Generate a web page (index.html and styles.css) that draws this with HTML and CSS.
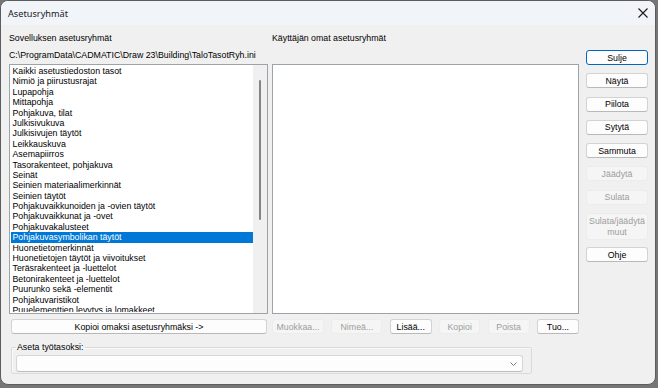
FILE: index.html
```html
<!DOCTYPE html>
<html lang="fi">
<head>
<meta charset="utf-8">
<title>Asetusryhmät</title>
<link rel="stylesheet" href="styles.css">
</head>
<body>
<div class="window">
  <div class="titlebar">
    <span class="title">Asetusryhmät</span>
    <span class="close">
      <svg width="10" height="10" viewBox="0 0 10 10"><path d="M0.5 0.5 L9.5 9.5 M9.5 0.5 L0.5 9.5" stroke="#1a1a1a" stroke-width="1.1" fill="none"/></svg>
    </span>
  </div>
  <div class="content">
    <div class="main">
      <div class="cols">
        <div class="head">
          <div class="label">Sovelluksen asetusryhmät</div>
          <div class="label path">C:\ProgramData\CADMATIC\Draw 23\Building\TaloTasotRyh.ini</div>
        </div>
        <div class="head">
          <div class="label">Käyttäjän omat asetusryhmät</div>
        </div>
        <div class="listbox left-list">
          <div class="items">
            <div class="item">Kaikki asetustiedoston tasot</div>
            <div class="item">Nimiö ja piirustusrajat</div>
            <div class="item">Lupapohja</div>
            <div class="item">Mittapohja</div>
            <div class="item">Pohjakuva, tilat</div>
            <div class="item">Julkisivukuva</div>
            <div class="item">Julkisivujen täytöt</div>
            <div class="item">Leikkauskuva</div>
            <div class="item">Asemapiirros</div>
            <div class="item">Tasorakenteet, pohjakuva</div>
            <div class="item">Seinät</div>
            <div class="item">Seinien materiaalimerkinnät</div>
            <div class="item">Seinien täytöt</div>
            <div class="item">Pohjakuvaikkunoiden ja -ovien täytöt</div>
            <div class="item">Pohjakuvaikkunat ja -ovet</div>
            <div class="item">Pohjakuvakalusteet</div>
            <div class="item selected">Pohjakuvasymbolikan täytöt</div>
            <div class="item">Huonetietomerkinnät</div>
            <div class="item">Huonetietojen täytöt ja viivoitukset</div>
            <div class="item">Teräsrakenteet ja -luettelot</div>
            <div class="item">Betonirakenteet ja -luettelot</div>
            <div class="item">Puurunko sekä -elementit</div>
            <div class="item">Pohjakuvaristikot</div>
            <div class="item">Puuelementtien levytys ja lomakkeet</div>
          </div>
          <div class="scrollbar"><div class="thumb"></div></div>
        </div>
        <div class="listbox right-list"></div>
        <div class="copyrow">
          <button class="btn wide">Kopioi omaksi asetusryhmäksi -&gt;</button>
        </div>
        <div class="actions">
          <button class="btn dis w52">Muokkaa...</button>
          <button class="btn dis w51">Nimeä...</button>
          <button class="btn w42">Lisää...</button>
          <button class="btn dis w41">Kopioi</button>
          <button class="btn dis w42">Poista</button>
          <button class="btn w42">Tuo...</button>
        </div>
      </div>
      <fieldset class="group">
        <legend>Aseta työtasoksi:</legend>
        <div class="combo">
          <svg width="7" height="4" viewBox="0 0 7 4"><path d="M0.5 0.5 L3.5 3.5 L6.5 0.5" stroke="#6a6a6a" stroke-width="0.9" fill="none"/></svg>
        </div>
      </fieldset>
    </div>
    <div class="side">
      <button class="btn sbtn default">Sulje</button>
      <button class="btn sbtn">Näytä</button>
      <button class="btn sbtn">Piilota</button>
      <button class="btn sbtn">Sytytä</button>
      <button class="btn sbtn">Sammuta</button>
      <button class="btn sbtn dis">Jäädytä</button>
      <button class="btn sbtn dis">Sulata</button>
      <button class="btn sbtn dis tall">Sulata/jäädytä<br>muut</button>
      <button class="btn sbtn">Ohje</button>
    </div>
  </div>
</div>
</body>
</html>
```

FILE: styles.css
```css
* { box-sizing: border-box; }
html, body {
  margin: 0;
  padding: 0;
  background: #767676;
  width: 658px;
  height: 388px;
  overflow: hidden;
}
.window {
  width: 656px;
  height: 385px;
  border: 1px solid #5c5c5c;
  border-radius: 8px;
  background: #f0f0f0;
  overflow: hidden;
  font-family: "Liberation Sans", Arial, sans-serif;
  font-size: 8.8px;
  color: #000;
}
.titlebar {
  height: 24px;
  background: #f1f4f9;
  display: flex;
  align-items: center;
  justify-content: space-between;
  padding: 0 5px 0 7px;
}
.title {
  font-family: "Noto Sans", "Liberation Sans", sans-serif;
  font-size: 9.2px;
  color: #1a1a1a;
}
.close {
  display: flex;
  width: 12px;
  height: 12px;
  align-items: center;
  justify-content: center;
  margin-right: 1px;
}
.content {
  display: flex;
  align-items: flex-start;
  padding: 7px 7px 0 8px;
}
.main {
  width: 570px;
}
.cols {
  display: grid;
  grid-template-columns: 259px 307px;
  column-gap: 4px;
}
.head {
  height: 32px;
}
.label {
  line-height: 12px;
  height: 12px;
  white-space: nowrap;
}
.path {
  margin-top: 5px;
}
.listbox {
  height: 250px;
  border: 1px solid #9ea2a9;
  background: #fff;
}
.left-list {
  display: flex;
  padding: 1px 0 1px 1px;
  overflow: hidden;
}
.items {
  flex: 1;
  overflow: hidden;
}
.item {
  height: 10.4px;
  line-height: 10.4px;
  padding-left: 1.5px;
  white-space: nowrap;
}
.item.selected {
  background: #0078d7;
  color: #fff;
}
.scrollbar {
  width: 14px;
  margin-top: -1px;
  margin-bottom: -1px;
  background: #f0f0f0;
  padding: 15px 0 0 6px;
}
.thumb {
  width: 2px;
  height: 140px;
  background: #858585;
  border-radius: 1px;
}
.copyrow {
  padding: 5px 1px 0 2px;
}
.actions {
  padding-top: 5px;
  display: flex;
  justify-content: space-between;
}
.btn {
  font-family: "Liberation Sans", Arial, sans-serif;
  font-size: 8.8px;
  color: #000;
  height: 15px;
  padding: 0;
  margin: 0;
  background: #fdfdfd;
  border: 1px solid #d3d3d3;
  border-bottom-color: #b9b9b9;
  border-radius: 3px;
  line-height: 12px;
  text-align: center;
}
.btn.dis {
  background: #f5f5f5;
  border-color: #ececec;
  color: #9d9d9d;
}
.wide { width: 100%; }
.w52 { width: 52px; }
.w51 { width: 51px; }
.w42 { width: 42px; }
.w41 { width: 41px; }
.group {
  margin: 8px 0 0 2px;
  width: 521px;
  height: 32px;
  border: 1px solid #dadada;
  box-shadow: inset 1px 1px 0 #fafafa;
  padding: 0 8px 0 4px;
  border-radius: 2px;
}
.group legend {
  padding: 0 1px;
  margin-left: 0;
  line-height: 11px;
  font-size: 8.8px;
}
.combo {
  margin-top: 2px;
  height: 17px;
  background: #fdfdfd;
  border: 1px solid #d6d6d6;
  border-bottom-color: #bdbdbd;
  border-radius: 3px;
  display: flex;
  align-items: center;
  justify-content: flex-end;
  padding-right: 5px;
}
.side {
  margin-left: 7px;
  margin-top: 18px;
  width: 62px;
  display: flex;
  flex-direction: column;
  gap: 8.3px;
}
.sbtn { width: 62px; }
.sbtn.tall {
  height: 27px;
  line-height: 11px;
}
.sbtn.tall + .sbtn { margin-top: -1px; }
.btn.default {
  border: 1.5px solid #0067c0;
}
```
